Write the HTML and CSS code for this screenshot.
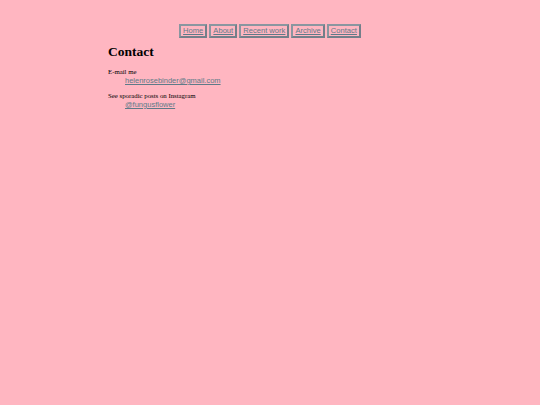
FILE: index.html
```html
<!DOCTYPE html>
<html>
<head>
<meta charset="utf-8">
<link rel="stylesheet" href="styles.css">
</head>
<body>
<nav class="nav">
  <a class="nav-item" href="#">Home</a>
  <a class="nav-item" href="#">About</a>
  <a class="nav-item" href="#">Recent work</a>
  <a class="nav-item" href="#">Archive</a>
  <a class="nav-item" href="#">Contact</a>
</nav>
<main class="content">
  <h1 class="title">Contact</h1>
  <dl class="list">
    <dt class="label">E-mail me</dt>
    <dd class="value"><a class="link" href="#">helenrosebinder@gmail.com</a></dd>
    <dt class="label">See sporadic posts on Instagram</dt>
    <dd class="value"><a class="link" href="#">@fungusflower</a></dd>
  </dl>
</main>
</body>
</html>
```
FILE: styles.css
```css
html, body {
  margin: 0;
  padding: 0;
  background: #ffb6c1;
}
body {
  font-family: "Liberation Serif", serif;
  font-size: 6.8px;
  color: #000;
}
.nav {
  display: flex;
  justify-content: center;
  gap: 2px;
  padding-top: 24px;
}
.nav-item {
  font-family: "Liberation Sans", Arial, sans-serif;
  font-size: 7.6px;
  line-height: 8px;
  color: #5e7a88;
  padding: 1px 2px;
  border: 2px solid #7f8b96;
  border-color: #8a96a0 #737f8a #737f8a #8a96a0;
}
.content {
  width: 60%;
  margin: 0 auto;
}
.title {
  font-size: 13.5px;
  font-weight: bold;
  line-height: 16px;
  margin: 6px 0 7px;
}
.list {
  margin: 0;
}
.label {
  line-height: 9px;
}
.value {
  margin: 0 0 6px 17px;
  line-height: 9px;
}
.link {
  font-family: "Liberation Sans", Arial, sans-serif;
  font-size: 7.5px;
  color: #5e7a88;
}
```
